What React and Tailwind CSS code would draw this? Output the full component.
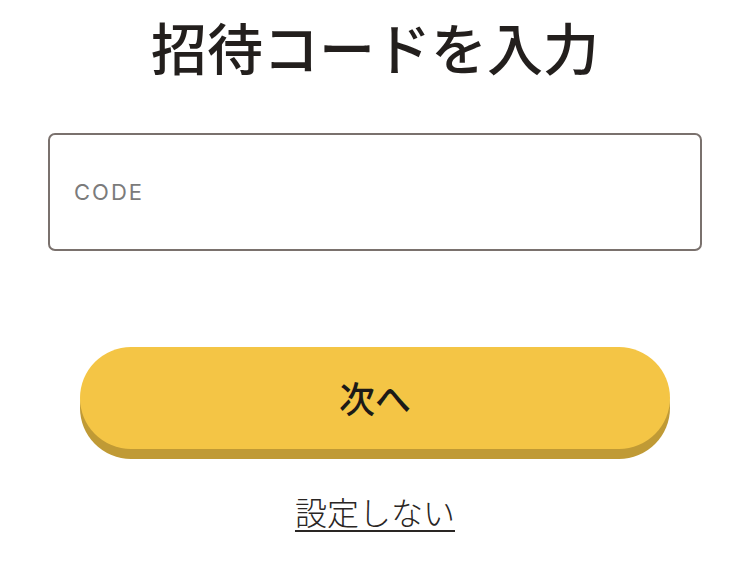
import React, { useState } from "react";

const jp = { fontFamily: '"Noto Sans CJK JP", "Noto Sans", sans-serif' };

const App = () => {
  const [code, setCode] = useState("");

  return (
    <div
      className="w-[750px] h-[574px] bg-white flex flex-col items-center overflow-hidden"
      style={jp}
    >
      <h1 className="mt-[6px] text-[56px] leading-[80px] font-medium text-[#231f1d]">
        招待コードを入力
      </h1>

      <div className="mt-[47px] w-[654px] h-[118px] border-2 border-[#7a716d] rounded-[7px] flex items-center px-[24px]">
        <input
          value={code}
          onChange={(e) => setCode(e.target.value)}
          placeholder="CODE"
          className="w-full bg-transparent outline-none text-[22px] tracking-[2px] text-[#333] placeholder:text-[#7b7b7b]"
          style={{ fontFamily: "Inter, Roboto, sans-serif" }}
        />
      </div>

      <button
        type="button"
        className="mt-[96px] w-[590px] h-[102px] pb-[3px] rounded-full bg-[#f4c545] shadow-[0_10px_0_#c09a35] flex items-center justify-center text-[36px] font-medium text-[#1c1a17]"
      >
        次へ
      </button>

      <button
        type="button"
        className="mt-[40px] text-[32px] leading-[44px] font-light text-[#2a2624] underline underline-offset-[5px] decoration-[2px]"
      >
        設定しない
      </button>
    </div>
  );
};

export default App;
